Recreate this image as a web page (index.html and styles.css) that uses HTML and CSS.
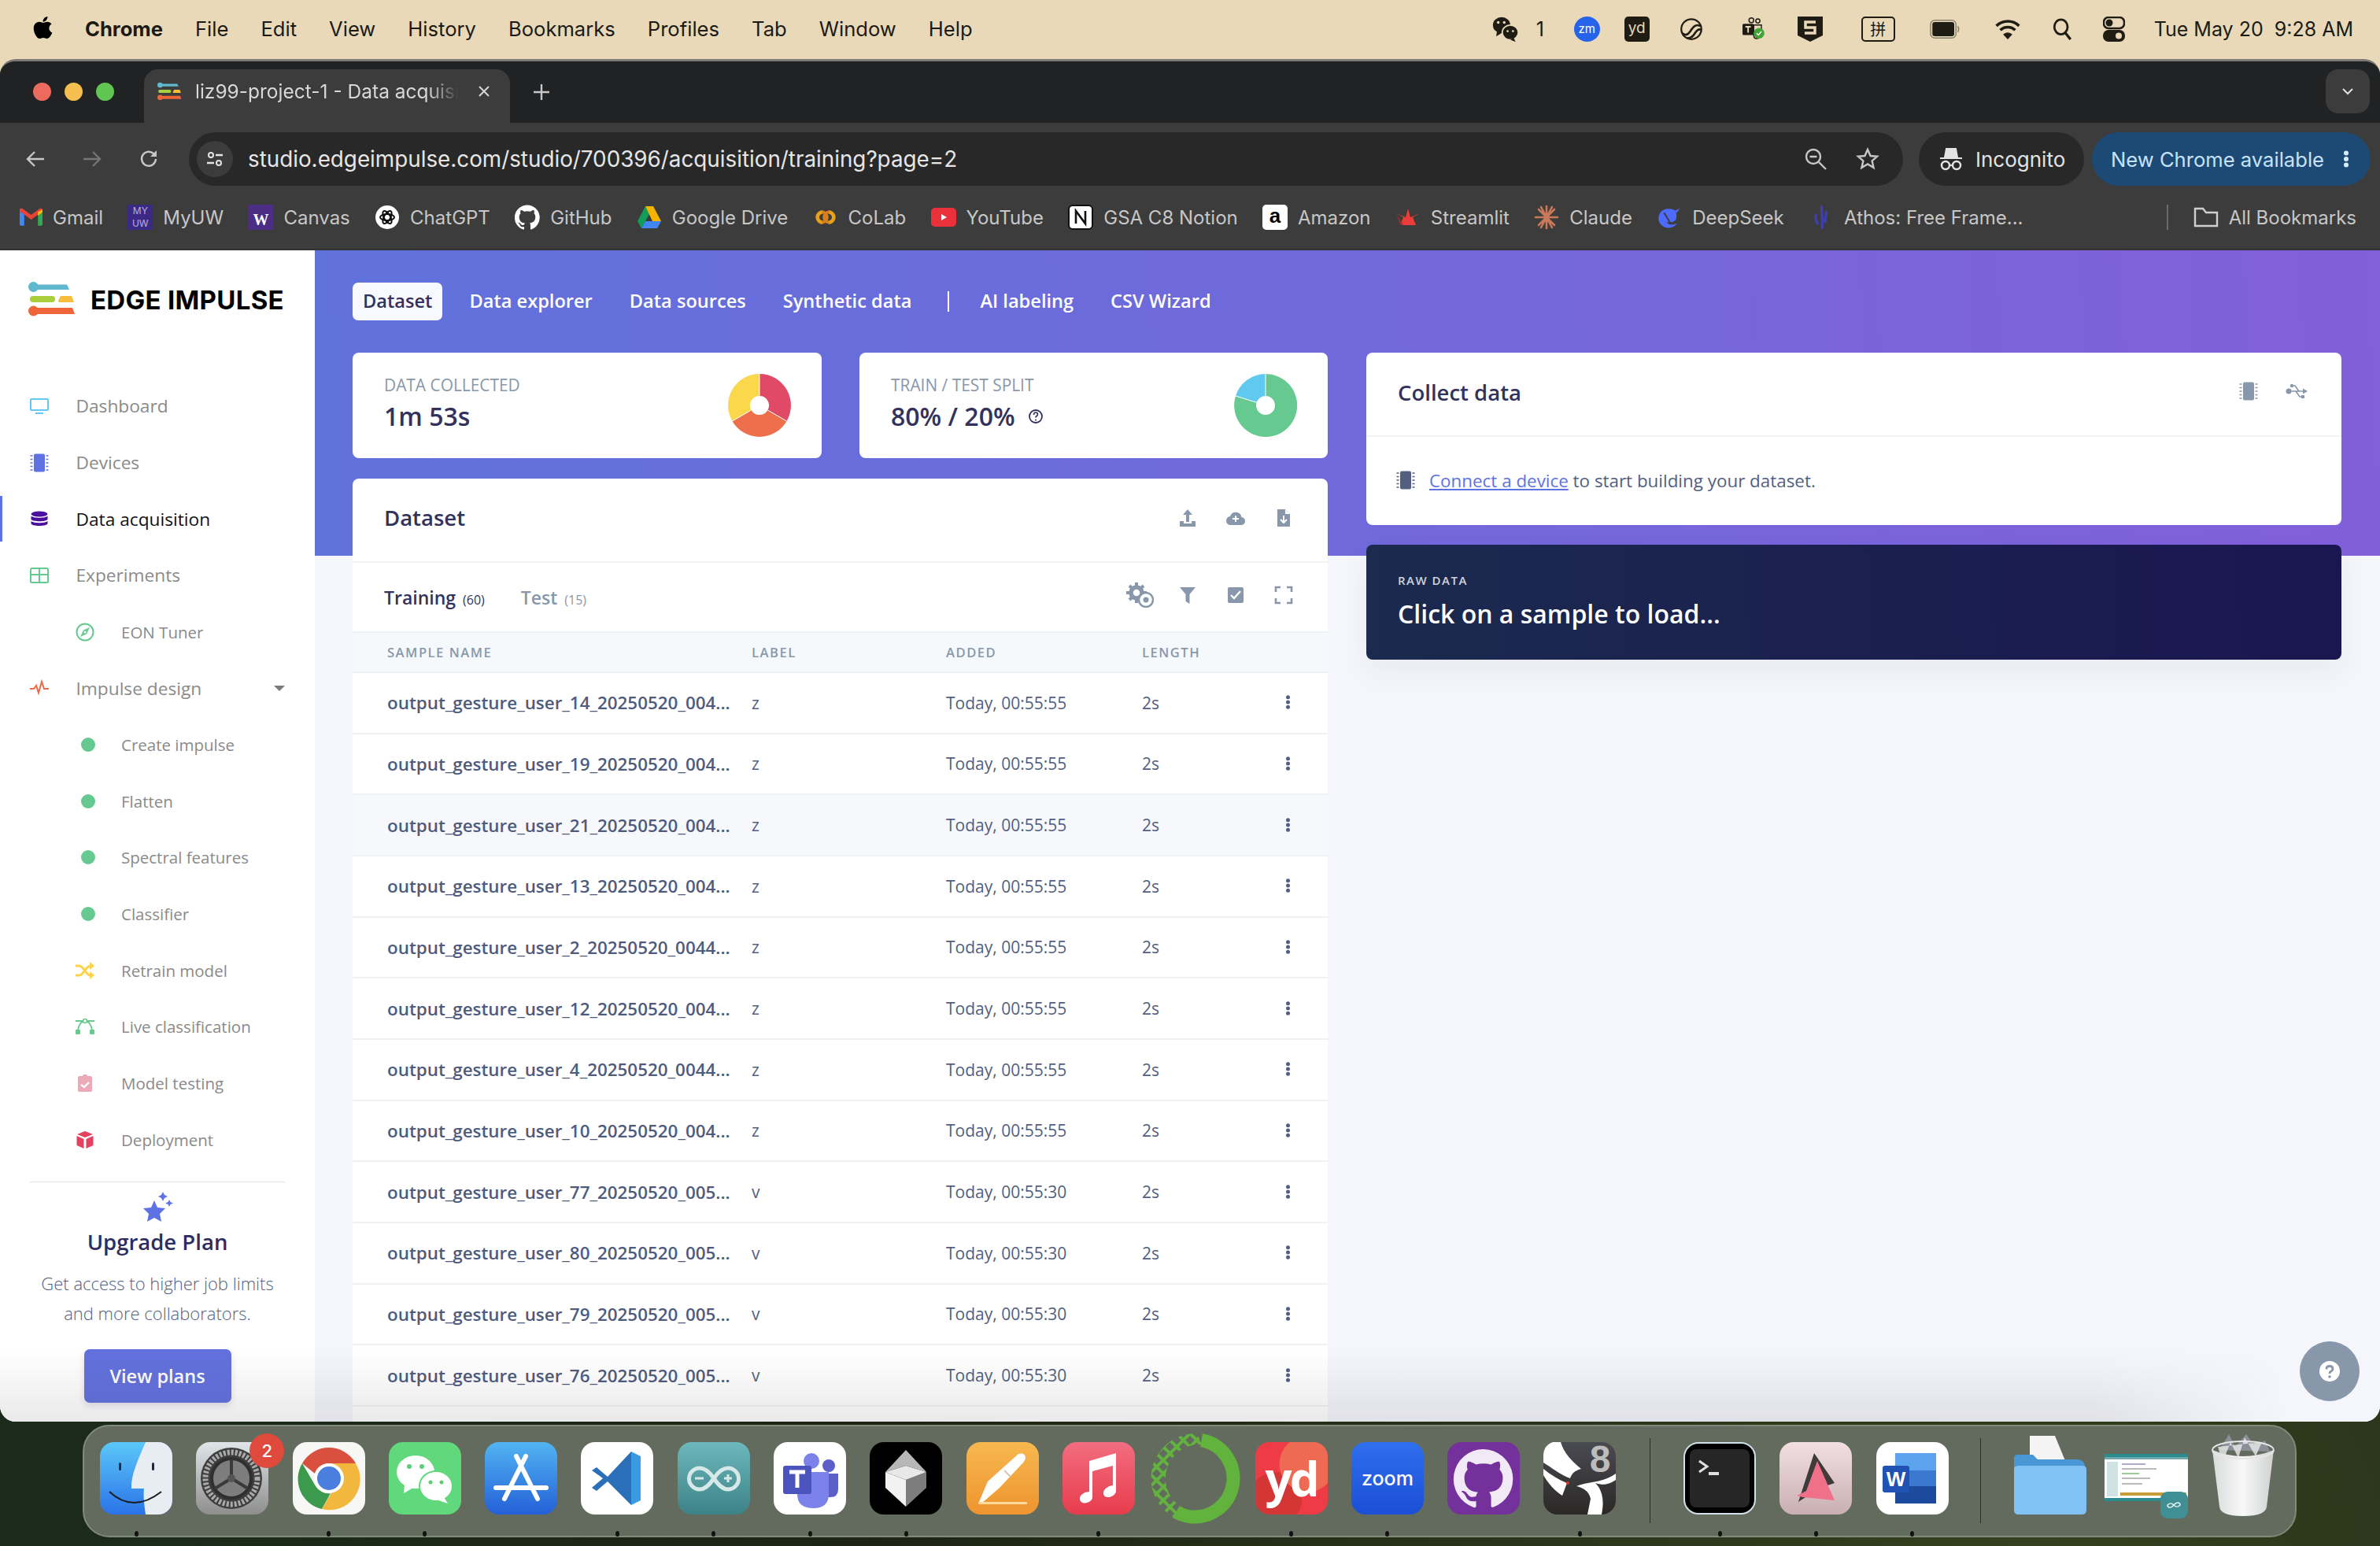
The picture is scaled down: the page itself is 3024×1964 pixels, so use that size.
FILE: index.html
```html
<!DOCTYPE html>
<html lang="en">
<head>
<meta charset="utf-8">
<title>liz99-project-1 - Data acquisition</title>
<link rel="stylesheet" href="styles.css">
</head>
<body>
<svg class="defs" aria-hidden="true">
  <symbol id="ei-logo" viewBox="0 0 62 44">
    <circle cx="6.5" cy="6.5" r="6.5" fill="#5fb8cd"/><path d="M6 3.5h43l3 6.5H6z" fill="#5fb8cd"/>
    <rect x="2" y="18" width="32" height="8" rx="4" fill="#a9cf3e"/><path d="M41 18h14l3 8H39q-2-1 0-4z" fill="#f6bd3c"/>
    <circle cx="6.5" cy="37" r="6.5" fill="#ee6539"/><path d="M6 33h50l3 8H6z" fill="#ee6539"/>
  </symbol>
  <symbol id="chip" viewBox="0 0 24 24">
    <rect x="5" y="0.500" width="14" height="23" rx="2" fill="currentColor"/>
    <path d="M0.500 3h3M0.500 7.500h3M0.500 12h3M0.500 16.500h3M0.500 21h3M20.500 3h3M20.500 7.500h3M20.500 12h3M20.500 16.500h3M20.500 21h3" stroke="currentColor" stroke-width="1.600"/>
  </symbol>
  <symbol id="github" viewBox="0 0 24 24"><path d="M12 .3a12 12 0 0 0-3.8 23.4c.6.1.8-.3.8-.6v-2c-3.3.7-4-1.6-4-1.6-.6-1.4-1.4-1.8-1.4-1.8-1-.7.1-.7.1-.7 1.2.1 1.8 1.2 1.8 1.2 1 1.8 2.8 1.3 3.5 1 .1-.8.4-1.3.8-1.6-2.7-.3-5.5-1.3-5.5-6 0-1.2.5-2.3 1.3-3.1-.1-.4-.6-1.6.1-3.2 0 0 1-.3 3.3 1.2a11.5 11.5 0 0 1 6 0c2.3-1.5 3.3-1.2 3.3-1.2.7 1.6.2 2.8.1 3.2.8.8 1.3 1.9 1.3 3.1 0 4.6-2.8 5.6-5.5 5.9.4.4.8 1.1.8 2.2v3.3c0 .3.2.7.8.6A12 12 0 0 0 12 .3z" fill="currentColor"/></symbol>
  <symbol id="kebab" viewBox="0 0 8 24"><circle cx="4" cy="4.5" r="3" fill="currentColor"/><circle cx="4" cy="12" r="3" fill="currentColor"/><circle cx="4" cy="19.5" r="3" fill="currentColor"/></symbol>
</svg>

<div class="desktop">
  <header class="menubar">
    <nav class="menu-left">
      <svg class="apple" viewBox="0 0 384 512"><path fill="#000" d="M318.7 268.7c-.2-36.7 16.4-64.4 50-84.8-18.8-26.9-47.2-41.7-84.7-44.6-35.5-2.8-74.3 20.7-88.5 20.7-15 0-49.4-19.7-76.4-19.7C63.3 141.2 4 184.8 4 273.5q0 39.3 14.4 81.2c12.8 36.7 59 126.7 107.2 125.2 25.2-.6 43-17.9 75.8-17.9 31.8 0 48.3 17.9 76.4 17.9 48.6-.7 90.4-82.5 102.6-119.3-65.2-30.7-61.7-90-61.7-91.9zm-56.6-164.2c27.3-32.4 24.8-61.9 24-72.5-24.1 1.4-52 16.4-67.9 34.9-17.5 19.8-27.8 44.3-25.6 71.9 26.1 2 49.9-11.4 69.5-34.3z"/></svg>
      <span class="app-name">Chrome</span><span>File</span><span>Edit</span><span>View</span><span>History</span><span>Bookmarks</span><span>Profiles</span><span>Tab</span><span>Window</span><span>Help</span>
    </nav>
    <div class="menu-right">
      <svg class="st st-wechat" viewBox="0 0 40 40"><ellipse cx="14" cy="14" rx="13" ry="12" fill="#1f1c14"/><path d="M7 23l-1 8 8-5z" fill="#1f1c14"/><ellipse cx="27" cy="25" rx="12" ry="11" fill="#1f1c14" stroke="#e9d9b9" stroke-width="2"/><path d="M32 33l3 6-8-3z" fill="#1f1c14"/><circle cx="9" cy="10" r="2" fill="#e9d9b9"/><circle cx="18" cy="10" r="2" fill="#e9d9b9"/><circle cx="23" cy="23" r="1.600" fill="#e9d9b9"/><circle cx="31" cy="23" r="1.600" fill="#e9d9b9"/></svg>
      <span class="st-count">1</span>
      <span class="st-zm">zm</span>
      <span class="st-yd">yd</span>
      <svg class="st st-cc" viewBox="0 0 40 40"><circle cx="20" cy="20" r="17" fill="none" stroke="#1f1c14" stroke-width="3"/><path d="M5 27c7 6 11 0 15-6s9-10 15-6" fill="none" stroke="#1f1c14" stroke-width="3.500"/><path d="M13 35c6 1 10-3 13-8s6-8 11-6" fill="none" stroke="#1f1c14" stroke-width="3.500"/></svg>
      <svg class="st st-teams" viewBox="0 0 38 40"><rect x="1" y="11" width="19" height="19" rx="2" fill="#1f1c14"/><path d="M6 16h9M10.500 16v10" stroke="#e9d9b9" stroke-width="2.500"/><circle cx="16" cy="5" r="4" fill="none" stroke="#1f1c14" stroke-width="2"/><circle cx="27" cy="6" r="3.500" fill="none" stroke="#1f1c14" stroke-width="2"/><path d="M20 13h13v14q-1 9-8 9-5 0-5-6z" fill="none" stroke="#1f1c14" stroke-width="2"/><circle cx="29" cy="27" r="9" fill="#3fa535"/><path d="M25 27l3 3 5-6" fill="none" stroke="#fff" stroke-width="2"/></svg>
      <svg class="st st-s" viewBox="0 0 32 32"><path d="M0 0h32v24L16 32 0 24z" fill="#1f1c14"/><path d="M23 7H10v7h12v7H9" fill="none" stroke="#e9d9b9" stroke-width="3.500"/></svg>
      <span class="st-pin">拼</span>
      <svg class="st st-batt" viewBox="0 0 50 32"><rect x="1" y="1" width="43" height="30" rx="7" fill="none" stroke="#8a8270" stroke-width="2"/><rect x="4" y="4" width="37" height="24" rx="4" fill="#1f1c14"/><path d="M47 11q3 5 0 10" fill="none" stroke="#8a8270" stroke-width="2"/></svg>
      <svg class="st st-wifi" viewBox="0 0 36 30"><path d="M2 11a23 23 0 0 1 32 0M7.500 17a15 15 0 0 1 21 0" fill="none" stroke="#1f1c14" stroke-width="4"/><path d="M18 30l-6.500-7a9 9 0 0 1 13 0z" fill="#1f1c14"/></svg>
      <svg class="st st-search" viewBox="0 0 26 30"><ellipse cx="11" cy="12" rx="9" ry="10" fill="none" stroke="#1f1c14" stroke-width="3"/><path d="M17 20l7 9" stroke="#1f1c14" stroke-width="3.500"/></svg>
      <svg class="st st-ctrl" viewBox="0 0 28 32"><rect x="1" y="1" width="26" height="14" rx="6" fill="none" stroke="#1f1c14" stroke-width="2.500"/><circle cx="8" cy="8" r="4.500" fill="#1f1c14"/><rect x="0" y="17" width="28" height="15" rx="7" fill="#1f1c14"/><circle cx="20" cy="24.500" r="4" fill="#e9d9b9"/></svg>
      <span class="clock"><span>Tue May 20</span><span>9:28 AM</span></span>
    </div>
  </header>

  <div class="window">
    <div class="tabstrip">
      <div class="lights"><i class="l-red"></i><i class="l-yellow"></i><i class="l-green"></i></div>
      <div class="tab">
        <svg class="favicon" viewBox="0 0 62 44"><use href="#ei-logo"/></svg>
        <span class="tab-title">liz99-project-1 - Data acquisition</span>
        <svg class="tab-x" viewBox="0 0 16 16"><path d="M2 2l12 12M14 2L2 14" stroke="#d6d6d6" stroke-width="2"/></svg>
      </div>
      <svg class="tab-plus" viewBox="0 0 22 22"><path d="M11 1v20M1 11h20" stroke="#c7c7c7" stroke-width="2.400"/></svg>
      <div class="tab-menu"><svg viewBox="0 0 16 10"><path d="M2 2l6 6 6-6" fill="none" stroke="#e0e0e0" stroke-width="2"/></svg></div>
    </div>

    <div class="toolbar">
      <svg class="tb tb-back" viewBox="0 0 26 26"><path d="M24 13H3M12 4l-9 9 9 9" fill="none" stroke="#c7c7c7" stroke-width="2.400"/></svg>
      <svg class="tb tb-fwd" viewBox="0 0 26 26"><path d="M2 13h21M14 4l9 9-9 9" fill="none" stroke="#757575" stroke-width="2.400"/></svg>
      <svg class="tb tb-reload" viewBox="0 0 26 26"><path d="M22 13a9 9 0 1 1-3-7l3 3" fill="none" stroke="#c7c7c7" stroke-width="2.400"/><path d="M23 2v8h-8z" fill="#c7c7c7"/></svg>
      <div class="omnibox">
        <span class="site-info"><svg viewBox="0 0 24 24"><circle cx="7" cy="7" r="3" fill="none" stroke="#e3e3e3" stroke-width="2"/><path d="M13 7h9M2 17h9" stroke="#e3e3e3" stroke-width="2.400"/><circle cx="17" cy="17" r="3" fill="none" stroke="#e3e3e3" stroke-width="2"/></svg></span>
        <span class="url">studio.edgeimpulse.com/studio/700396/acquisition/training?page=2</span>
        <svg class="om-zoom" viewBox="0 0 30 30"><circle cx="12" cy="12" r="9" fill="none" stroke="#c7c7c7" stroke-width="2.400"/><path d="M7.500 12h9M19 19l9 9" stroke="#c7c7c7" stroke-width="2.400"/></svg>
        <svg class="om-star" viewBox="0 0 30 30"><path d="M15 3l3.600 8 8.400.8-6.400 5.600 2 8.600-7.600-4.500-7.600 4.500 2-8.600L3 11.800l8.400-.8z" fill="none" stroke="#c7c7c7" stroke-width="2.400"/></svg>
      </div>
      <div class="incognito">
        <svg viewBox="0 0 30 30"><path d="M9 2h12l2 11H7zM1 14h28" fill="#e3e3e3" stroke="#e3e3e3" stroke-width="2"/><circle cx="8" cy="23" r="5" fill="none" stroke="#e3e3e3" stroke-width="2.500"/><circle cx="22" cy="23" r="5" fill="none" stroke="#e3e3e3" stroke-width="2.500"/><path d="M13 23h4" stroke="#e3e3e3" stroke-width="2"/></svg>
        <span>Incognito</span>
      </div>
      <div class="update"><span>New Chrome available</span><svg viewBox="0 0 8 24"><use href="#kebab"/></svg></div>
    </div>

    <div class="bookmarks">
      <a class="bm bm-gmail"><svg viewBox="0 0 30 26"><path d="M0 5l6 4v15H2q-2 0-2-2z" fill="#4285f4"/><path d="M24 9l6-4v17q0 2-2 2h-4z" fill="#34a853"/><path d="M0 2v3l15 11 15-11V2l-3-1-12 9L3 1z" fill="#ea4335"/><path d="M24 6v5l6-5V3z" fill="#fbbc04"/></svg>Gmail</a>
      <a class="bm"><span class="fav-myuw">MY<br>UW</span>MyUW</a>
      <a class="bm"><span class="fav-canvas">W</span>Canvas</a>
      <a class="bm"><svg viewBox="0 0 32 32"><circle cx="16" cy="16" r="15" fill="#fff"/><g fill="none" stroke="#111" stroke-width="2"><ellipse cx="16" cy="16" rx="9" ry="4"/><ellipse cx="16" cy="16" rx="9" ry="4" transform="rotate(60 16 16)"/><ellipse cx="16" cy="16" rx="9" ry="4" transform="rotate(120 16 16)"/></g></svg>ChatGPT</a>
      <a class="bm bm-white"><svg viewBox="0 0 24 24"><use href="#github"/></svg>GitHub</a>
      <a class="bm"><svg viewBox="0 0 32 30"><path d="M11 1L1 20l5 9 10-18z" fill="#0f9d58"/><path d="M21 1l10 19H20L11 1z" fill="#f4b400"/><path d="M6 29h20l5-9H11z" fill="#4285f4"/></svg>Google Drive</a>
      <a class="bm"><svg viewBox="0 0 34 24"><path d="M13 5a7 7 0 1 0 0 14" fill="none" stroke="#e8a016" stroke-width="5"/><path d="M21 5a7 7 0 1 1 0 14" fill="none" stroke="#e8a016" stroke-width="5"/><path d="M12 5a7 7 0 0 1 0 14M22 5a7 7 0 0 0 0 14" fill="none" stroke="#d97f1e" stroke-width="4"/></svg>CoLab</a>
      <a class="bm"><svg viewBox="0 0 32 24"><rect width="32" height="24" rx="5" fill="#e9303b"/><path d="M13 8l7 4-7 4z" fill="#fff"/></svg>YouTube</a>
      <a class="bm"><svg viewBox="0 0 32 32"><rect x="1" y="1" width="30" height="30" rx="5" fill="#fff" stroke="#111" stroke-width="2"/><path d="M10 24V8l12 16V8" fill="none" stroke="#111" stroke-width="2.600"/></svg>GSA C8 Notion</a>
      <a class="bm"><span class="fav-amazon">a</span>Amazon</a>
      <a class="bm"><svg viewBox="0 0 32 24"><path d="M1 7l9 5L6 22h20l-4-10 9-5-12 5-3-11-3 11z" fill="#e8412e"/><path d="M7 22l9-14 9 14z" fill="#ec3b3b"/><path d="M1 7l9 15H6z" fill="#9c2e2e"/></svg>Streamlit</a>
      <a class="bm"><svg viewBox="0 0 32 32"><g stroke="#c9795a" stroke-width="2.600" stroke-linecap="round"><path d="M16 2v28M6 6l20 20M26 6L6 26M2 16h28M9 3l14 26M23 3L9 29"/></g></svg>Claude</a>
      <a class="bm"><svg viewBox="0 0 34 30"><path d="M31 2c-2 3-4 3-6 4C19 2 8 3 4 10c-4 8 0 17 9 19 6 1 11-1 15-6-6 3-12 3-15-2 5 2 10 1 13-3 1-3 1-6 0-9 3-1 4-4 5-7z" fill="#4d6bfe"/><path d="M10 9l9 15" stroke="#3a3a3a" stroke-width="2"/></svg>DeepSeek</a>
      <a class="bm"><svg viewBox="0 0 32 32"><path d="M17 1c-2 8 2 12 0 30M10 12c-3 5 0 9 2 13M22 8c2 5-2 9-1 15" fill="none" stroke="#3f3fa8" stroke-width="3.500"/></svg>Athos: Free Frame...</a>
      <i class="bm-sep"></i>
      <a class="bm bm-all"><svg viewBox="0 0 32 28"><path d="M2 25V3h10l4 5h14v17z" fill="none" stroke="#cfcfcf" stroke-width="2.400"/></svg>All Bookmarks</a>
    </div>

    <div class="page">
      <aside class="sidebar">
        <div class="brand"><svg viewBox="0 0 62 44"><use href="#ei-logo"/></svg><span>EDGE IMPULSE</span></div>
        <nav class="nav">
          <a class="nav-item"><svg class="ni" viewBox="0 0 24 24"><rect x="1" y="3" width="22" height="14" rx="1" fill="none" stroke="#64c8ef" stroke-width="2"/><path d="M7 21h10" stroke="#64c8ef" stroke-width="2"/></svg>Dashboard</a>
          <a class="nav-item"><svg class="ni ni-blue" viewBox="0 0 24 24"><use href="#chip"/></svg>Devices</a>
          <a class="nav-item is-active"><svg class="ni" viewBox="0 0 24 24"><ellipse cx="12" cy="6" rx="10.500" ry="3.500" fill="#4a0f9f"/><path d="M1.500 8.500c3 3 18 3 21 0V13c-3 3-18 3-21 0zM1.500 15c3 3 18 3 21 0v3c0 4-21 4-21 0z" fill="#4a0f9f"/></svg>Data acquisition</a>
          <a class="nav-item"><svg class="ni" viewBox="0 0 24 24"><rect x="1" y="3" width="22" height="18" rx="1.500" fill="none" stroke="#66ca90" stroke-width="2"/><path d="M1 11h22M12 3v18" stroke="#66ca90" stroke-width="2"/></svg>Experiments</a>
          <a class="nav-item sub"><svg class="ni" viewBox="0 0 24 24"><circle cx="12" cy="12" r="10.500" fill="none" stroke="#66ca90" stroke-width="2"/><path d="M18 6l-8 3.500-4 8.500 8-3.500z" fill="#66ca90"/><circle cx="12" cy="12" r="1.500" fill="#fff"/></svg>EON Tuner</a>
          <a class="nav-item has-caret"><svg class="ni" viewBox="0 0 24 24"><path d="M0 13h5l3-4 3 9 4-14 3 9h6" fill="none" stroke="#ee6a4a" stroke-width="2"/></svg>Impulse design<i class="caret"></i></a>
          <a class="nav-item sub"><i class="step-dot"></i>Create impulse</a>
          <a class="nav-item sub"><i class="step-dot"></i>Flatten</a>
          <a class="nav-item sub"><i class="step-dot"></i>Spectral features</a>
          <a class="nav-item sub"><i class="step-dot"></i>Classifier</a>
          <a class="nav-item sub"><svg class="ni" viewBox="0 0 24 24"><path d="M0 6h5c5 0 8 12 14 12M0 18h5c5 0 8-12 14-12" fill="none" stroke="#fbd34a" stroke-width="3"/><path d="M18 1l6 5-6 5zM18 13l6 5-6 5z" fill="#fbd34a"/></svg>Retrain model</a>
          <a class="nav-item sub"><svg class="ni" viewBox="0 0 24 24"><path d="M3 17C4 9 8 5 12 5s8 4 9 12M0 5h24" fill="none" stroke="#66ca90" stroke-width="1.800"/><rect y="16" width="6" height="6" rx="1" fill="#66ca90"/><rect x="18" y="16" width="6" height="6" rx="1" fill="#66ca90"/><circle cx="12" cy="5" r="2.500" fill="#fff" stroke="#66ca90" stroke-width="1.500"/></svg>Live classification</a>
          <a class="nav-item sub"><svg class="ni" viewBox="0 0 24 24"><rect x="3" y="3" width="18" height="20" rx="2" fill="#eda9b8"/><rect x="9" y="1" width="6" height="4" rx="1.500" fill="#eda9b8"/><path d="M7 14l4 3 6-6" fill="none" stroke="#fff" stroke-width="2.400"/></svg>Model testing</a>
          <a class="nav-item sub"><svg class="ni" viewBox="0 0 24 24"><path d="M12 1l10 4-10 4L2 5z" fill="#e5405e"/><path d="M1.500 7l9 4v12l-9-4zM22.500 7l-9 4v12l9-4z" fill="#e5405e"/></svg>Deployment</a>
        </nav>
        <div class="upgrade">
          <svg class="upgrade-star" viewBox="0 0 40 40"><path d="M16 11l4 9 10 1-7 7 2 10-9-5-9 5 2-10-7-7 10-1z" fill="#5e72e4"/><path d="M27 0l2 4 4 2-4 2-2 4-2-4-4-2 4-2zM35 10l1.500 3 3.500 1.500-3.500 1.500-1.500 3-1.500-3-3.500-1.500 3.500-1.500z" fill="#5e72e4"/></svg>
          <h3>Upgrade Plan</h3>
          <p>Get access to higher job limits and more collaborators.</p>
          <a class="btn-plans">View plans</a>
        </div>
      </aside>

      <main class="main">
        <div class="hero"></div>
        <div class="content">
          <nav class="subnav">
            <a class="is-current">Dataset</a><a>Data explorer</a><a>Data sources</a><a>Synthetic data</a><i></i><a>AI labeling</a><a>CSV Wizard</a>
          </nav>
          <div class="columns">
            <div class="col">
              <div class="stats">
                <section class="card stat">
                  <div><div class="stat-label">DATA COLLECTED</div><div class="stat-value">1m 53s</div></div>
                  <svg class="donut" viewBox="0 0 80 80">
                    <path d="M40 0A40 40 0 0 1 74.600 60L50.400 46A12 12 0 0 0 40 28z" fill="#e14a67"/>
                    <path d="M74.600 60A40 40 0 0 1 5.400 60L29.600 46A12 12 0 0 0 50.400 46z" fill="#ed6f4c"/>
                    <path d="M5.400 60A40 40 0 0 1 40 0V28A12 12 0 0 0 29.600 46z" fill="#fbd84b"/>
                    <path d="M40 0V28M74.600 60L50.400 46M5.400 60L29.600 46" stroke="#fff" stroke-width="1"/>
                  </svg>
                </section>
                <section class="card stat">
                  <div><div class="stat-label">TRAIN / TEST SPLIT</div><div class="stat-value">80% / 20% <svg class="qmark" viewBox="0 0 20 20"><circle cx="10" cy="10" r="8" fill="none" stroke="#32325d" stroke-width="1.800"/><path d="M7.500 8q0-3 2.500-3t2.500 2.500q0 1.500-2.500 3v1" fill="none" stroke="#32325d" stroke-width="1.600"/><circle cx="10" cy="14.500" r="1" fill="#32325d"/></svg></div></div>
                  <svg class="donut" viewBox="0 0 80 80">
                    <path d="M40 0A40 40 0 1 1 2 28L28.600 36.300A12 12 0 1 0 40 28z" fill="#66ca90"/>
                    <path d="M2 28A40 40 0 0 1 40 0V28A12 12 0 0 0 28.600 36.300z" fill="#5fc9ef"/>
                    <path d="M40 0V28M2 28L28.600 36.300" stroke="#fff" stroke-width="1"/>
                  </svg>
                </section>
              </div>
              <section class="card dataset">
                <header class="card-head">
                  <h2>Dataset</h2>
                  <div class="tools">
                    <svg viewBox="0 0 24 24"><path d="M12 1l6 7h-4v9h-4V8H6zM2 16h5v3h10v-3h5v7H2z" fill="#8898aa"/></svg>
                    <svg viewBox="0 0 24 24"><path d="M6 21a5.500 5.500 0 0 1-1-11 7.500 7.500 0 0 1 14.500 1 5 5 0 0 1-1 10z" fill="#8898aa"/><path d="M12 9v8M8 13h8" stroke="#fff" stroke-width="2"/></svg>
                    <svg viewBox="0 0 24 24"><path d="M4 1h10l6 6v16H4z" fill="#8898aa"/><path d="M14 1v6h6" fill="#fff"/><path d="M12 9v9M8 14l4 4 4-4" fill="none" stroke="#fff" stroke-width="2"/></svg>
                  </div>
                </header>
                <div class="dataset-tabs">
                  <a class="dt is-current">Training <small>(60)</small></a>
                  <a class="dt">Test <small>(15)</small></a>
                  <div class="tools">
                    <svg class="gear" viewBox="0 0 36 32"><circle cx="14" cy="13" r="7" fill="none" stroke="#8898aa" stroke-width="5.500"/><path d="M14 0v5M14 21v5M1 13h5M22 13h5M5 4l3.500 3.500M23 4l-3.500 3.500M5 22l3.500-3.500" stroke="#8898aa" stroke-width="4"/><circle cx="26" cy="22" r="9" fill="#fff" stroke="#8898aa" stroke-width="2.500"/><circle cx="26" cy="22" r="3.500" fill="#8898aa"/></svg>
                    <svg viewBox="0 0 24 24"><path d="M2 2h20l-7.500 9v12l-5-3v-9z" fill="#8898aa"/></svg>
                    <svg viewBox="0 0 24 24"><rect x="2" y="2" width="20" height="20" rx="2" fill="#8898aa"/><path d="M6 12l4 4 8-9" fill="none" stroke="#fff" stroke-width="2.400"/></svg>
                    <svg viewBox="0 0 24 24"><path d="M2 8V2h6M16 2h6v6M22 16v6h-6M8 22H2v-6" fill="none" stroke="#8898aa" stroke-width="2.600"/></svg>
                  </div>
                </div>
                <table class="samples">
                  <thead><tr><th>SAMPLE NAME</th><th>LABEL</th><th>ADDED</th><th>LENGTH</th><th></th></tr></thead>
                  <tbody>
                    <tr><td class="name">output_gesture_user_14_20250520_004...</td><td>z</td><td>Today, 00:55:55</td><td>2s</td><td class="more"><svg viewBox="0 0 8 24"><use href="#kebab"/></svg></td></tr>
                    <tr><td class="name">output_gesture_user_19_20250520_004...</td><td>z</td><td>Today, 00:55:55</td><td>2s</td><td class="more"><svg viewBox="0 0 8 24"><use href="#kebab"/></svg></td></tr>
                    <tr class="is-hover"><td class="name">output_gesture_user_21_20250520_004...</td><td>z</td><td>Today, 00:55:55</td><td>2s</td><td class="more"><svg viewBox="0 0 8 24"><use href="#kebab"/></svg></td></tr>
                    <tr><td class="name">output_gesture_user_13_20250520_004...</td><td>z</td><td>Today, 00:55:55</td><td>2s</td><td class="more"><svg viewBox="0 0 8 24"><use href="#kebab"/></svg></td></tr>
                    <tr><td class="name">output_gesture_user_2_20250520_0044...</td><td>z</td><td>Today, 00:55:55</td><td>2s</td><td class="more"><svg viewBox="0 0 8 24"><use href="#kebab"/></svg></td></tr>
                    <tr><td class="name">output_gesture_user_12_20250520_004...</td><td>z</td><td>Today, 00:55:55</td><td>2s</td><td class="more"><svg viewBox="0 0 8 24"><use href="#kebab"/></svg></td></tr>
                    <tr><td class="name">output_gesture_user_4_20250520_0044...</td><td>z</td><td>Today, 00:55:55</td><td>2s</td><td class="more"><svg viewBox="0 0 8 24"><use href="#kebab"/></svg></td></tr>
                    <tr><td class="name">output_gesture_user_10_20250520_004...</td><td>z</td><td>Today, 00:55:55</td><td>2s</td><td class="more"><svg viewBox="0 0 8 24"><use href="#kebab"/></svg></td></tr>
                    <tr><td class="name">output_gesture_user_77_20250520_005...</td><td>v</td><td>Today, 00:55:30</td><td>2s</td><td class="more"><svg viewBox="0 0 8 24"><use href="#kebab"/></svg></td></tr>
                    <tr><td class="name">output_gesture_user_80_20250520_005...</td><td>v</td><td>Today, 00:55:30</td><td>2s</td><td class="more"><svg viewBox="0 0 8 24"><use href="#kebab"/></svg></td></tr>
                    <tr><td class="name">output_gesture_user_79_20250520_005...</td><td>v</td><td>Today, 00:55:30</td><td>2s</td><td class="more"><svg viewBox="0 0 8 24"><use href="#kebab"/></svg></td></tr>
                    <tr><td class="name">output_gesture_user_76_20250520_005...</td><td>v</td><td>Today, 00:55:30</td><td>2s</td><td class="more"><svg viewBox="0 0 8 24"><use href="#kebab"/></svg></td></tr>
                  </tbody>
                </table>
              </section>
            </div>
            <div class="col">
              <section class="card collect">
                <header class="collect-head">
                  <h2>Collect data</h2>
                  <div class="tools tools-right">
                    <svg class="c-muted" viewBox="0 0 24 24"><use href="#chip"/></svg>
                    <svg class="usb" viewBox="0 0 28 24"><path d="M3 12h21M17 12l-5-7h-3M13 12l5 7h3" fill="none" stroke="#8898aa" stroke-width="1.700"/><circle cx="4" cy="12" r="3.500" fill="#8898aa"/><path d="M22 8.500l6 3.500-6 3.500z" fill="#8898aa"/><circle cx="8" cy="5" r="2.200" fill="#8898aa"/><rect x="20" y="17" width="4" height="4" fill="#8898aa"/></svg>
                  </div>
                </header>
                <div class="collect-body">
                  <svg class="c-slate" viewBox="0 0 24 24"><use href="#chip"/></svg>
                  <p><a class="link">Connect a device</a> to start building your dataset.</p>
                </div>
              </section>
              <section class="rawdata">
                <div class="raw-label">RAW DATA</div>
                <div class="raw-title">Click on a sample to load...</div>
              </section>
            </div>
          </div>
        </div>
        <a class="help"><svg viewBox="0 0 26 26"><circle cx="13" cy="13" r="13" fill="#fff"/><path d="M9 10.500q0-4 4-4t4 3.500q0 2-2.500 3.200-1.500.8-1.500 2.800" fill="none" stroke="#8898aa" stroke-width="2.800"/><circle cx="13" cy="20" r="1.800" fill="#8898aa"/></svg></a>
      </main>
      <div class="page-fade"></div>
    </div>
  </div>

  <footer class="dock">
    <div class="dock-item dotted"><svg viewBox="0 0 92 92"><defs><linearGradient id="fb" x1="0" y1="0" x2="0" y2="1"><stop offset="0" stop-color="#5bc8f8"/><stop offset="1" stop-color="#2a73e8"/></linearGradient></defs><rect width="92" height="92" rx="18" fill="url(#fb)"/><path d="M58 0H74a18 18 0 0 1 18 18v56a18 18 0 0 1-18 18H58c-2-14-3-24-2-33H40c-1-16 8-36 18-59z" fill="#e8ecf3"/><path d="M12 63q30 28 66 0" fill="none" stroke="#1c1c1c" stroke-width="2"/><rect x="24" y="26" width="3" height="10" rx="1.500" fill="#1c2b44"/><rect x="66" y="26" width="3" height="10" rx="1.500" fill="#1c2b44"/></svg></div>
    <div class="dock-item"><svg viewBox="0 0 92 92"><defs><linearGradient id="sg" x1="0" y1="0" x2="0" y2="1"><stop offset="0" stop-color="#dfe5e8"/><stop offset="1" stop-color="#8e8e8e"/></linearGradient></defs><rect width="92" height="92" rx="18" fill="url(#sg)"/><circle cx="45" cy="46" r="39" fill="#3e3e3e"/><circle cx="45" cy="46" r="33" fill="none" stroke="#a9a9a9" stroke-width="7" stroke-dasharray="3 2"/><circle cx="45" cy="46" r="25" fill="#7d7d7d" stroke="#2f2f2f" stroke-width="4"/><path d="M45 46V22M45 46L24 59M45 46l21 13" stroke="#3a3a3a" stroke-width="4"/><circle cx="45" cy="46" r="5" fill="#555"/></svg><span class="badge">2</span></div>
    <div class="dock-item dotted"><svg viewBox="0 0 92 92"><rect width="92" height="92" rx="18" fill="#f7f7f5"/><path d="M46 7a39 39 0 0 1 34 20H46a19 19 0 0 0-18 13L12 27A39 39 0 0 1 46 7z" fill="#d9503f"/><path d="M12 27l17 29a19 19 0 0 0 19 9L37 85A39 39 0 0 1 12 27z" fill="#3c9a4e"/><path d="M80 27a39 39 0 0 1-43 58l17-29a19 19 0 0 0-8-29z" fill="#f2b83d"/><circle cx="46" cy="46" r="19" fill="#fff"/><circle cx="46" cy="46" r="15" fill="#4a7fe0"/></svg></div>
    <div class="dock-item dotted"><svg viewBox="0 0 92 92"><rect width="92" height="92" rx="18" fill="#62d87c"/><ellipse cx="34" cy="38" rx="24" ry="21" fill="#fff"/><path d="M20 54l-1 11 12-7z" fill="#fff"/><ellipse cx="60" cy="56" rx="21" ry="19" fill="#fff" stroke="#62d87c" stroke-width="2"/><path d="M70 70l5 8-12-4z" fill="#fff"/><circle cx="26" cy="31" r="3" fill="#5bcf75"/><circle cx="42" cy="31" r="3" fill="#5bcf75"/><circle cx="53" cy="51" r="2.500" fill="#5bcf75"/><circle cx="67" cy="51" r="2.500" fill="#5bcf75"/></svg></div>
    <div class="dock-item"><svg viewBox="0 0 92 92"><defs><linearGradient id="ap" x1="0" y1="0" x2="0" y2="1"><stop offset="0" stop-color="#52b4f2"/><stop offset="1" stop-color="#2460d8"/></linearGradient></defs><rect width="92" height="92" rx="18" fill="url(#ap)"/><path d="M52 18L25 72M40 18l27 54M14 58h64" stroke="#fff" stroke-width="6" stroke-linecap="round" fill="none"/></svg></div>
    <div class="dock-item dotted"><svg viewBox="0 0 92 92"><rect width="92" height="92" rx="18" fill="#fff"/><path d="M64 12l12 6v56l-12 6z" fill="#3c99e4"/><path d="M64 12L34 44 20 32l-6 4 14 10-14 12 6 4 14-12 30 30z" fill="#2a6fb8"/></svg></div>
    <div class="dock-item dotted"><svg viewBox="0 0 92 92"><defs><linearGradient id="ar" x1="0" y1="0" x2="0" y2="1"><stop offset="0" stop-color="#6cb8bd"/><stop offset="1" stop-color="#3e8286"/></linearGradient></defs><rect width="92" height="92" rx="18" fill="url(#ar)"/><path d="M46 46c-6-9-11-13-18-13a13 13 0 0 0 0 27c7 0 12-5 18-14s11-13 18-13a13 13 0 0 1 0 27c-7 0-12-5-18-14z" fill="none" stroke="#d7e8e8" stroke-width="5"/><path d="M22 46h11M59 46h10M64 41v10" stroke="#d7e8e8" stroke-width="3"/></svg></div>
    <div class="dock-item dotted"><svg viewBox="0 0 92 92"><rect width="92" height="92" rx="18" fill="#fff"/><circle cx="70" cy="30" r="8" fill="#5b5fc7"/><circle cx="48" cy="24" r="10" fill="#7b83eb"/><path d="M60 40h22v20q0 10-10 10H62z" fill="#5b5fc7"/><path d="M30 38h40v28q0 18-20 18T30 66z" fill="#7b83eb"/><rect x="12" y="30" width="36" height="36" rx="3" fill="#4b53bc"/><path d="M20 38h20M30 38v20" stroke="#fff" stroke-width="5"/></svg></div>
    <div class="dock-item dotted"><svg viewBox="0 0 92 92"><rect width="92" height="92" rx="18" fill="#000"/><path d="M46 10L20 38l26-8 26 8z" fill="#b7b7b7"/><path d="M20 38v20l26 24V48z" fill="#f2f2f2"/><path d="M72 38v20L46 82V48z" fill="#7d7d7d"/><path d="M20 38l26 10 26-10-26-8z" fill="#e8e8e8"/></svg></div>
    <div class="dock-item"><svg viewBox="0 0 92 92"><defs><linearGradient id="pg" x1="0" y1="0" x2="0" y2="1"><stop offset="0" stop-color="#f7b84e"/><stop offset="1" stop-color="#ee9430"/></linearGradient></defs><rect width="92" height="92" rx="18" fill="url(#pg)"/><path d="M66 15q8-2 9 4 0 3-2 6L42 58 20 77l-4-1 11-26z" fill="#fff"/><path d="M48 36l8 8" stroke="#cfc8ba" stroke-width="2"/><rect x="15" y="76" width="62" height="3" rx="1" fill="#ffd89a"/></svg></div>
    <div class="dock-item dotted"><svg viewBox="0 0 92 92"><defs><linearGradient id="mu" x1="0" y1="0" x2="0" y2="1"><stop offset="0" stop-color="#f26d80"/><stop offset="1" stop-color="#e83c4c"/></linearGradient></defs><rect width="92" height="92" rx="18" fill="url(#mu)"/><path d="M34 24l34-10v48c0 7-14 12-16 4-1-7 8-11 12-11V30l-26 7v33c0 7-14 11-16 3-1-7 8-10 12-10z" fill="#fff"/></svg></div>
    <div class="dock-item dock-ring"><svg viewBox="0 0 114 114"><defs><pattern id="lat" width="17" height="17" patternUnits="userSpaceOnUse"><path d="M0 0L17 17M17 0L0 17" stroke="#62b33d" stroke-width="4"/></pattern></defs><circle cx="57" cy="57" r="49" fill="none" stroke="#62b33d" stroke-width="17" stroke-dasharray="170 300" transform="rotate(-80 57 57)"/><path d="M60 0A57 57 0 0 0 57 114L60 100A43 43 0 0 1 66 14Z" fill="url(#lat)"/></svg></div>
    <div class="dock-item dotted"><div class="tile t-yd">yd</div></div>
    <div class="dock-item dotted"><div class="tile t-zoom">zoom</div></div>
    <div class="dock-item"><svg viewBox="0 0 92 92"><rect width="92" height="92" rx="18" fill="#74309b"/><g transform="translate(8 8) scale(3.170)"><path d="M12 .3a12 12 0 0 0-3.800 23.400c.6.100.800-.3.800-.6v-2c-3.300.7-4-1.600-4-1.600-.6-1.400-1.400-1.800-1.400-1.800-1-.7.100-.7.100-.7 1.200.1 1.800 1.200 1.800 1.200 1 1.800 2.800 1.300 3.500 1 .1-.8.400-1.300.8-1.600-2.700-.3-5.500-1.300-5.500-6 0-1.200.5-2.300 1.300-3.100-.1-.4-.6-1.600.1-3.200 0 0 1-.3 3.300 1.200a11.500 11.500 0 0 1 6 0c2.300-1.500 3.300-1.200 3.300-1.200.7 1.600.2 2.800.1 3.200.8.800 1.300 1.900 1.300 3.100 0 4.600-2.800 5.600-5.500 5.900.4.400.8 1.100.8 2.200v3.300c0 .3.2.7.8.6A12 12 0 0 0 12 .3z" fill="#f2e9f7"/></g></svg></div>
    <div class="dock-item dotted"><svg viewBox="0 0 92 92"><defs><linearGradient id="rh" x1="0" y1="0" x2="0" y2="1"><stop offset="0" stop-color="#4a4a52"/><stop offset="1" stop-color="#2b2826"/></linearGradient></defs><rect width="92" height="92" rx="18" fill="url(#rh)"/><path d="M0 18Q0 4 12 0h10c4 14 14 24 26 34-8 2-12 6-14 12C22 42 10 32 0 26z" fill="#fff"/><path d="M0 34c10 8 20 14 30 18l-6 16C14 62 6 52 0 42z" fill="#fff"/><path d="M92 40v8C80 56 74 54 66 52c8 8 12 20 8 40H56l4-20c-2-10-10-14-18-16 14-6 34-4 50-16z" fill="#fff"/><circle cx="31" cy="52" r="2" fill="#d8342c"/><text class="rh-eight" x="72" y="38">8</text></svg></div>
    <i class="dock-sep"></i>
    <div class="dock-item dotted"><svg viewBox="0 0 92 92"><rect x="1" y="1" width="90" height="90" rx="18" fill="#000" stroke="#cfe0e6" stroke-width="2"/><rect x="8" y="9" width="76" height="74" rx="8" fill="#262626"/><path d="M20 24l10 7-10 7" fill="none" stroke="#e0e0e0" stroke-width="3"/><rect x="32" y="38" width="13" height="4" fill="#e0e0e0"/></svg></div>
    <div class="dock-item dotted"><svg viewBox="0 0 92 92"><defs><linearGradient id="pk" x1="0" y1="0" x2="0" y2="1"><stop offset="0" stop-color="#f2dfe2"/><stop offset="1" stop-color="#c9afb2"/></linearGradient></defs><rect width="92" height="92" rx="18" fill="url(#pk)"/><path d="M44 14l26 38-18 6-28 18z" fill="#3f3b3b"/><path d="M48 24l22 50-40-4-8-2 12-6z" fill="#f0708a"/></svg></div>
    <div class="dock-item dotted"><svg viewBox="0 0 92 92"><rect width="92" height="92" rx="18" fill="#fff"/><path d="M24 14h52v22H24z" fill="#5ca2ec"/><path d="M24 36h52v20H24z" fill="#3b79d0"/><path d="M24 56h52v22H24z" fill="#1c4a9c"/><rect x="8" y="30" width="34" height="34" rx="3" fill="#1f52b3"/><text class="w-letter" x="25" y="56">W</text></svg></div>
    <i class="dock-sep dock-sep-b"></i>
    <div class="dock-item"><svg class="tall" viewBox="0 0 96 92"><path d="M22 -8h32l14 34H22z" fill="#f4f4f4"/><path d="M2 20q0-4 4-4h20l6 6h50q10 0 10 10v54q0 6-6 6H8q-6 0-6-6z" fill="#4a97d6"/><path d="M2 34q0-4 6-4h80q6 0 6 4v52q0 6-6 6H8q-6 0-6-6z" fill="#7fc2f3"/></svg></div>
    <div class="dock-item dock-wide"><svg viewBox="0 0 106 92"><rect y="15" width="106" height="60" fill="#fff"/><rect y="15" width="106" height="4" fill="#2b8b8f"/><rect y="19" width="106" height="3" fill="#6fa9ab"/><rect x="22" y="27" width="30" height="2" fill="#aac"/><rect x="22" y="33" width="44" height="2" fill="#bbb"/><rect x="22" y="39" width="22" height="2" fill="#9c9"/><rect x="22" y="45" width="36" height="2" fill="#bbb"/><rect x="22" y="52" width="26" height="2" fill="#bbb"/><rect x="3" y="25" width="14" height="44" fill="#cfe3e3"/><rect x="20" y="64" width="84" height="4" fill="#c69c38"/><rect y="71" width="106" height="4" fill="#2b8b8f"/><rect x="71" y="63" width="35" height="34" rx="9" fill="#3f8f94"/><path d="M80 80c3-3 5-3 8 0s5 3 8 0c0-4-5-4-8 0s-8 4-8 0z" fill="none" stroke="#e3f0f0" stroke-width="1.500"/></svg></div>
    <div class="dock-item dock-trash"><svg viewBox="0 0 80 108"><defs><linearGradient id="tr" x1="0" y1="0" x2="1" y2="0"><stop offset="0" stop-color="#d9dbdb"/><stop offset=".5" stop-color="#f8f8f8"/><stop offset="1" stop-color="#cfd1d1"/></linearGradient></defs><path d="M10 24l12-20 8 16 14-16 10 14 14-6 6 14z" fill="#8b8f97"/><path d="M8 20l6 20 10-26 10 20 8-26 14 24 8-18z" fill="#eaeaea" opacity=".8"/><path d="M1 24q39 16 78 0l-9 72q-1 12-30 12T10 96z" fill="url(#tr)"/><ellipse cx="40" cy="24" rx="39" ry="11" fill="none" stroke="#e6e6e6" stroke-width="2"/></svg></div>
  </footer>
</div>
</body>
</html>
```
FILE: styles.css
```css
* { box-sizing: border-box; }
html, body { margin: 0; padding: 0; }
body { width: 3024px; height: 1964px; overflow: hidden; font-family: "Open Sans", sans-serif; }
a { color: inherit; text-decoration: none; }
.defs { position: absolute; width: 0; height: 0; }

.desktop {
  width: 3024px; height: 1964px; display: flex; flex-direction: column; overflow: hidden;
  background:
    linear-gradient(#e9d9b9 0 100px, transparent 100px),
    radial-gradient(ellipse at 85% 100%, #34401f 0, #1d2414 40%, transparent 60%),
    linear-gradient(90deg, #1b2a1b, #202817 50%, #1a2112);
}

/* macOS menu bar */
.menubar {
  height: 75px; flex: none; background: #e9d9b9; display: flex; align-items: center; justify-content: space-between;
  font-family: Inter, "Liberation Sans", sans-serif; font-size: 25.6px; color: #1c1a15; padding: 0 34px 2px 42px;
}
.menu-left { display: flex; align-items: center; gap: 41px; }
.apple { width: 25px; height: 32px; margin-bottom: 4px; }
.app-name { font-weight: 700; }
.menu-right { display: flex; align-items: center; gap: 38px; font-size: 25px; }
.st { flex: none; display: block; }
.st-wechat { width: 42px; height: 34px; }
.st-count { margin-left: -20px; font-size: 25px; width: 10px; }
.st-zm { width: 33px; height: 32px; border-radius: 50%; background: #2763ea; color: #fff; font-size: 15px; text-align: center; line-height: 32px; }
.st-yd { width: 32px; height: 32px; border-radius: 5px; background: #1f1c14; color: #e9d9b9; font-size: 19px; text-align: center; line-height: 30px; margin-left: -7px; }
.st-cc { width: 38px; height: 30px; margin-left: -4px; }
.st-teams { width: 37px; height: 30px; margin-left: 3px; }
.st-s { width: 32px; height: 32px; }
.st-pin { width: 43px; height: 32px; border: 2px solid #1f1c14; border-radius: 5px; font: 20px/28px "Noto Sans CJK SC", sans-serif; text-align: center; margin-left: 11px; }
.st-batt { width: 50px; height: 24px; }
.st-wifi { width: 34px; height: 27px; }
.st-search { width: 25px; height: 28px; margin-left: 2px; }
.st-ctrl { width: 28px; height: 32px; margin-left: 1px; }
.clock { display: flex; gap: 14px; margin-left: -1px; font-size: 25px; }

/* Browser window */
.window {
  height: 1731px; flex: none; display: flex; flex-direction: column; border-radius: 20px; overflow: hidden;
  background: #3c3c3c; border-top: 3px solid #7c7a74;
  font-family: Inter, "Liberation Sans", sans-serif;
}
.tabstrip { height: 78px; flex: none; background: #202223; display: flex; align-items: flex-end; position: relative; padding-left: 42px; }
.lights { display: flex; gap: 17px; width: 141px; align-self: flex-start; padding-top: 27px; }
.lights i { width: 23px; height: 23px; border-radius: 50%; display: block; }
.l-red { background: #ec6a5e; } .l-yellow { background: #f4bf4f; } .l-green { background: #61c554; }
.tab { width: 465px; height: 68px; background: #3c3c3c; border-radius: 18px 18px 0 0; display: flex; align-items: center; padding: 0 0 12px 17px; color: #d8d8d8; font-size: 24.5px; }
.favicon { width: 32px; height: 28px; flex: none; }
.tab-title { width: 335px; margin-left: 16px; white-space: nowrap; overflow: hidden; -webkit-mask-image: linear-gradient(90deg, #000 88%, transparent); mask-image: linear-gradient(90deg, #000 88%, transparent); }
.tab-x { width: 16px; height: 16px; margin-left: 24px; flex: none; }
.tab-plus { width: 22px; height: 22px; margin: 0 0 28px 29px; align-self: flex-end; }
.tab-menu { margin: 0 13px 12px auto; width: 56px; height: 56px; border-radius: 16px; background: #3c3c3c; display: flex; align-items: center; justify-content: center; align-self: flex-end; }
.tab-menu svg { width: 16px; height: 10px; }

.toolbar { height: 80px; flex: none; display: flex; align-items: center; padding: 12px 12px 0 32px; }
.tb { width: 26px; height: 26px; flex: none; margin-right: 46px; }
.omnibox { width: 2178px; height: 68px; margin-left: -8px; border-radius: 34px; background: #282828; display: flex; align-items: center; padding: 0 30px 0 10px; color: #e6e6e6; font-size: 27.8px; flex: none; }
.site-info { width: 46px; height: 46px; border-radius: 50%; background: #3c3c3c; flex: none; display: flex; align-items: center; justify-content: center; }
.site-info svg { width: 24px; height: 24px; }
.url { margin-left: 19px; flex: 1; white-space: nowrap; }
.om-zoom, .om-star { width: 30px; height: 30px; flex: none; }
.om-star { margin-left: 36px; }
.incognito { margin-left: 20px; width: 210px; height: 68px; border-radius: 34px; background: #282828; display: flex; align-items: center; gap: 16px; padding-left: 26px; color: #e3e3e3; font-size: 26px; flex: none; }
.incognito svg { width: 30px; height: 30px; }
.update { margin-left: 10px; width: 354px; height: 68px; border-radius: 34px; background: #1d4a75; color: #c7e3fb; display: flex; align-items: center; padding-left: 24px; font-size: 25.6px; flex: none; }
.update svg { width: 8px; height: 24px; margin-left: 24px; color: #d6ecff; }

.bookmarks { height: 82px; flex: none; display: flex; align-items: center; gap: 31.3px; padding: 0 30px 0 25px; color: #c7c7c7; font-size: 24px; border-bottom: 2px solid #333; }
.bm { display: flex; align-items: center; gap: 13px; white-space: nowrap; }
.bm > svg, .bm > span { width: 32px; height: 32px; flex: none; }
.bm-gmail > svg { width: 29px; }
.bm-white > svg { color: #fff; }
.bm-sep { width: 2px; height: 32px; background: #6a6a6a; margin-left: auto; }
.fav-myuw { background: #3b2a85; color: #b7aedb; font-size: 12px; line-height: 16px; text-align: center; }
.fav-canvas { background: #4b2e83; color: #fff; font: 700 20px/32px "Liberation Serif", serif; text-align: center; padding-top: 3px; }
.fav-amazon { background: #fff; color: #000; border-radius: 5px; font: 700 26px/28px "Liberation Sans", sans-serif; text-align: center; }

/* Studio page */
.page { flex: 1; min-height: 0; display: flex; background: #fff; position: relative; font-family: "Open Sans", sans-serif; }
.page-fade { position: absolute; left: 0; right: 0; bottom: 0; height: 90px; background: linear-gradient(transparent, rgba(60,60,70,.11)); pointer-events: none; -webkit-mask-image: linear-gradient(90deg, #000 88%, transparent 96%); mask-image: linear-gradient(90deg, #000 88%, transparent 96%); }
.sidebar { width: 400px; flex: none; display: flex; flex-direction: column; background: #fff; position: relative; }
.brand { display: flex; align-items: center; height: 126px; padding: 0 0 0 36px; gap: 17px; color: #000; font-family: Inter, sans-serif; font-weight: 700; font-size: 33px; letter-spacing: 0.3px; }
.brand svg { width: 62px; height: 44px; flex: none; margin-top: -2px; }
.nav { padding-top: 36px; display: flex; flex-direction: column; }
.nav-item { height: 71.7px; display: flex; align-items: center; padding-left: 38px; color: #8a8a8a; font-size: 22.7px; position: relative; white-space: nowrap; }
.nav-item .ni { width: 24px; height: 24px; flex: none; margin-right: 34.5px; }
.ni-blue { color: #5e72e4; }
.nav-item.sub { padding-left: 96px; font-size: 20.5px; }
.nav-item.sub .ni { margin-right: 34px; }
.step-dot { width: 18px; height: 18px; border-radius: 50%; background: #66ca90; margin-left: 7px; margin-right: 33px; flex: none; }
.is-active { color: #111; }
.is-active::before { content: ""; position: absolute; left: 0; top: 7px; bottom: 7px; width: 3px; background: #5e72e4; }
.caret { position: absolute; right: 38px; top: 33px; border: 7px solid transparent; border-top: 7px solid #7a7a7a; border-bottom: 0; }
.upgrade { margin: 17px 38px 0; border-top: 1px solid #e4e4e4; display: flex; flex-direction: column; align-items: center; text-align: center; }
.upgrade-star { width: 40px; height: 40px; margin-top: 12px; flex: none; }
.upgrade h3 { margin: 2px 0 0; font-size: 27.5px; line-height: 44px; font-weight: 600; color: #2d2e5f; white-space: nowrap; }
.upgrade p { margin: 11px 0 0; font-size: 22px; line-height: 38px; color: #525f7f; font-weight: 300; }
.btn-plans { margin-top: 27px; width: 187px; height: 68px; border-radius: 7px; background: #6271dd; color: #fff; font-weight: 600; font-size: 23.5px; line-height: 68px; box-shadow: 0 4px 8px rgba(50,50,93,.15); }

.main { flex: 1; min-width: 0; background: #f5f6fb; position: relative; overflow: hidden; }
.hero { position: absolute; left: 0; right: 0; top: 0; height: 388px; background: linear-gradient(87deg, #6072dc 0, #825fdb 100%); }
.content { position: relative; padding: 41px 49px 0 48px; }
.subnav { display: flex; align-items: center; height: 48px; color: #fff; font-size: 23.6px; font-weight: 600; }
.subnav a { padding: 0 13px; height: 48px; line-height: 46px; margin-right: 21px; white-space: nowrap; }
.subnav .is-current { background: #f8f9fe; color: #32325d; border-radius: 7px; }
.subnav i { width: 2px; height: 26px; background: #fff; margin: 0 26px 0 12px; }
.columns { display: grid; grid-template-columns: 1239px 1239px; gap: 49px; margin-top: 41px; }
.col { min-width: 0; display: flex; flex-direction: column; }
.card { background: #fff; border-radius: 8px; }
.stats { display: grid; grid-template-columns: 596px 595px; gap: 48px; }
.stat { height: 134px; display: flex; align-items: center; justify-content: space-between; padding: 0 39px 0 40px; }
.stat-label { font-size: 20.9px; color: #8898aa; line-height: 26px; white-space: nowrap; }
.stat-value { font-size: 32px; line-height: 50px; font-weight: 600; color: #32325d; display: flex; align-items: center; gap: 16px; white-space: nowrap; margin-top: 2px; }
.qmark { width: 20px; height: 20px; }
.donut { width: 80px; height: 80px; flex: none; }
.dataset { margin-top: 26px; padding-bottom: 60px; }
.card-head { height: 107px; display: flex; align-items: center; justify-content: space-between; padding: 0 44px 6px 40px; border-bottom: 2px solid #f2f3f7; }
.card h2 { margin: 0; font-size: 27.5px; font-weight: 600; color: #32325d; }
.tools { display: flex; align-items: center; gap: 37px; margin-left: auto; }
.tools svg { width: 24px; height: 24px; display: block; }
.tools .gear { width: 36px; height: 32px; margin-right: -6px; }
.dataset-tabs { height: 87px; display: flex; align-items: center; padding: 0 44px 0 40px; gap: 46px; }
.dataset-tabs .tools { margin-top: -6px; }
.dt { font-size: 23px; color: #8898aa; font-weight: 600; white-space: nowrap; }
.dt.is-current { color: #32325d; }
.dt small { font-size: 16px; font-weight: 400; margin-left: 3px; }
.samples { width: 100%; table-layout: fixed; border-collapse: collapse; }
.samples th { height: 51px; padding: 0; background: #f6f9fc; border-top: 2px solid #eef0f5; border-bottom: 2px solid #eef0f5; color: #8898aa; font-size: 16.6px; font-weight: 600; letter-spacing: 1.500px; text-align: left; }
.samples th:first-child, .samples td:first-child { padding-left: 44px; width: 507px; }
.samples th:nth-child(2) { width: 247px; } .samples th:nth-child(3) { width: 249px; } .samples th:nth-child(4) { width: 146px; }
.samples td { height: 77.66px; padding: 0; border-bottom: 2px solid #f0f1f5; font-size: 21px; color: #525f7f; white-space: nowrap; }
.samples td.name { font-size: 22.4px; font-weight: 600; color: #4f5b7d; }
.is-hover td { background: #f7f8fb; }
.more { color: #6f7f92; }
.more svg { width: 7px; height: 20px; display: block; margin-left: 36px; margin-top: -1px; }
.collect { height: 219px; }
.collect-head { height: 107px; display: flex; align-items: center; padding: 0 43px 4px 40px; border-bottom: 2px solid #f2f3f7; }
.tools-right { gap: 35px; }
.tools-right svg { margin-top: -4px; }
.tools .usb { width: 28px; height: 24px; }
.c-muted { color: #8898aa; }
.c-slate { color: #525f7f; width: 24px; height: 24px; flex: none; }
.collect-body { display: flex; align-items: center; height: 112px; padding-left: 38px; gap: 18px; margin-top: -1px; }
.collect-body p { margin: 0; font-size: 22.4px; color: #525f7f; white-space: nowrap; }
.link { color: #5e72e4; text-decoration: underline; }
.rawdata { margin-top: 25px; height: 146px; border-radius: 8px; padding: 33px 40px 0; background: linear-gradient(87deg, #1b2a4e 0, #1a1650 100%); box-shadow: 0 15px 35px rgba(50,50,93,.06); }
.raw-label { font-size: 15px; line-height: 24px; letter-spacing: 1.500px; color: #ced4da; font-weight: 600; }
.raw-title { font-size: 32px; line-height: 44px; margin-top: 9px; font-weight: 600; color: #fff; white-space: nowrap; }
.help { position: absolute; right: 26px; bottom: 26px; width: 76px; height: 76px; border-radius: 50%; background: #8898aa; display: flex; align-items: center; justify-content: center; }
.help svg { width: 26px; height: 26px; }

/* Dock */
.dock {
  width: 2813px; height: 143px; margin: 4px 0 0 105px; flex: none; display: flex; align-items: flex-start; gap: 30.3px; padding: 20px 0 0 20px;
  border-radius: 34px; background: #636a5e; border: 2px solid #7f8a79; font-family: Inter, sans-serif; position: relative;
}
.dock-item { width: 92px; height: 92px; flex: none; position: relative; }
.dock-item > svg { width: 100%; height: 100%; display: block; overflow: visible; }
.dotted::after { content: ""; position: absolute; left: 43.5px; top: 113px; width: 5px; height: 7px; border-radius: 50%; background: #111; }
.badge { position: absolute; right: -20px; top: -11px; width: 44px; height: 44px; border-radius: 50%; background: #e04a3c; color: #fff; font-size: 22px; font-weight: 500; line-height: 44px; text-align: center; }
.dock-ring > svg { width: 114px; height: 114px; margin: -11px 0 0 -11px; }
.tile { width: 92px; height: 92px; border-radius: 18px; color: #fff; display: flex; align-items: center; justify-content: center; }
.t-yd { background: radial-gradient(circle at 72% 30%, #ee6a52 0 38%, transparent 39%), radial-gradient(circle at 28% 78%, #d43636 0 34%, transparent 35%), #ee3b46; font: 700 60px/1 "Open Sans", sans-serif; letter-spacing: -3px; }
.t-zoom { background: linear-gradient(#2f6fee, #1b4fd6); font: 500 25px/1 Inter, sans-serif; }
.w-letter { font: 700 26px "Liberation Sans", sans-serif; fill: #fff; text-anchor: middle; }
.rh-eight { font: 700 48px "Liberation Sans", sans-serif; fill: #bcbcbc; text-anchor: middle; }
.dock-sep { width: 1px; height: 108px; background: #2c2f2a; margin: -5px 12px 0; flex: none; }
.dock-sep-b { margin: -5px 10px 0; }
.dock-item .tall { height: 100%; width: 96px; }
.dock-wide { width: 106px; margin-left: -6px; }
.dock-trash { width: 80px; }
.dock-trash > svg { height: 108px; margin-top: -14px; }
```
